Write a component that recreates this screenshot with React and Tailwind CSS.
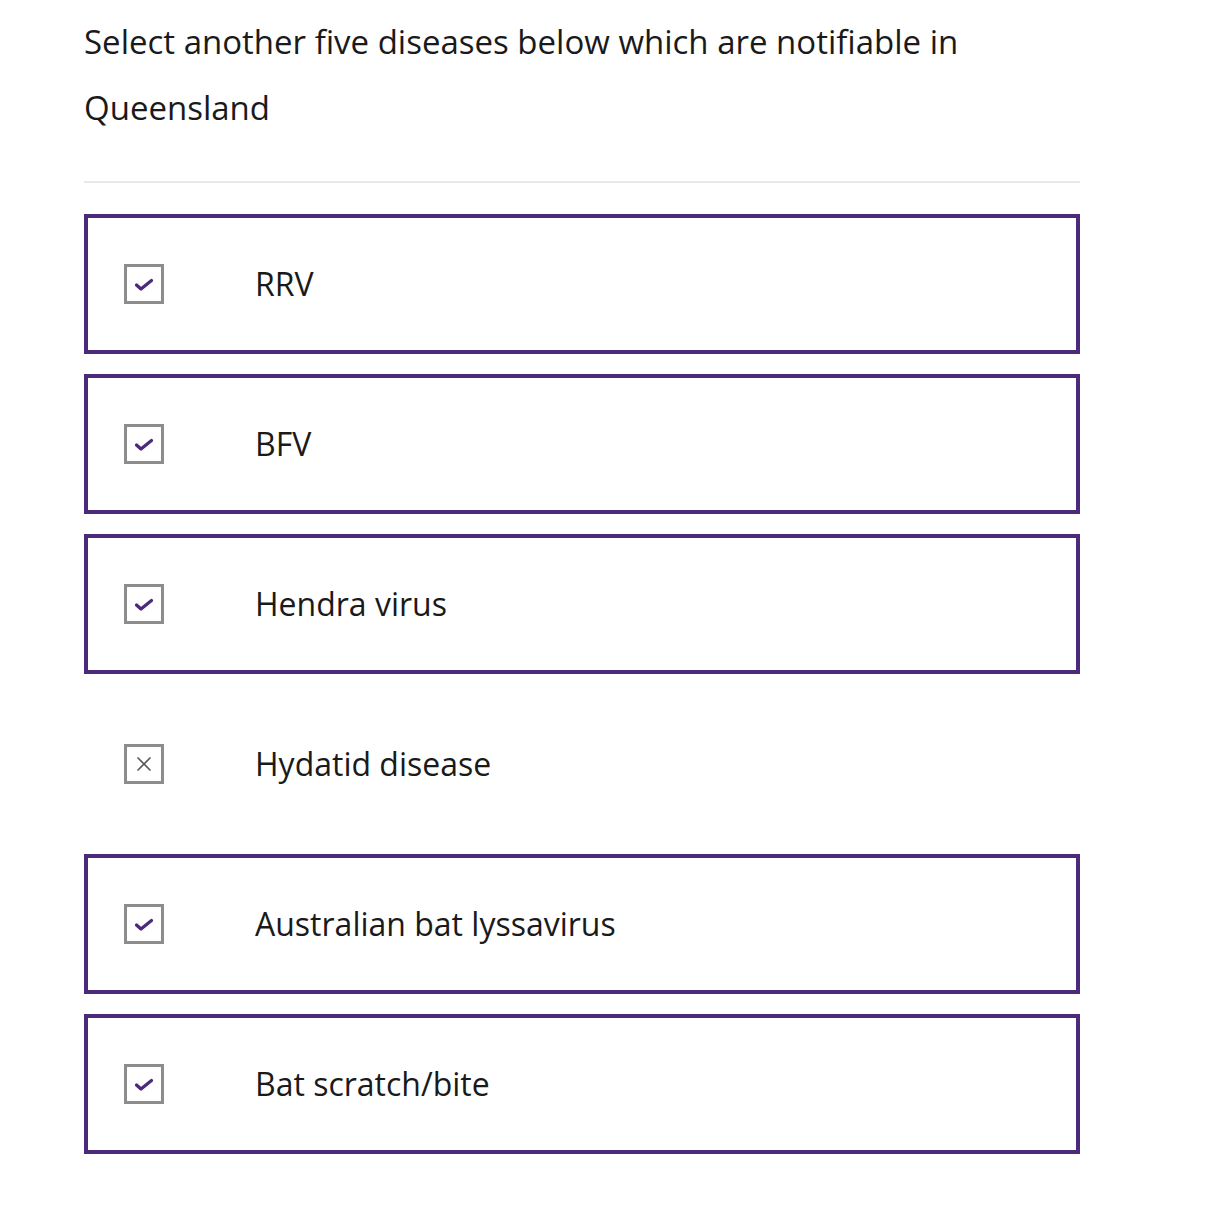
const items = [
  { label: 'RRV', correct: true },
  { label: 'BFV', correct: true },
  { label: 'Hendra virus', correct: true },
  { label: 'Hydatid disease', correct: false },
  { label: 'Australian bat lyssavirus', correct: true },
  { label: 'Bat scratch/bite', correct: true },
]

function Mark({ correct }) {
  return (
    <div className="w-10 h-10 border-[3px] border-[#8c8c8c] flex items-center justify-center shrink-0 bg-white">
      {correct ? (
        <svg width="20" height="15" viewBox="0 0 20 15" fill="none">
          <path d="M2.5 8l4.5 4L17.5 3.5" stroke="#4b2a7b" strokeWidth="3.2" strokeLinecap="round" strokeLinejoin="round" />
        </svg>
      ) : (
        <svg width="18" height="18" viewBox="0 0 18 18" fill="none">
          <path d="M2.5 2.5l13 13M15.5 2.5l-13 13" stroke="#555" strokeWidth="1.6" />
        </svg>
      )}
    </div>
  )
}

export default function App() {
  return (
    <div className="bg-white min-h-[1222px] font-['Open_Sans',sans-serif] text-[#1a1a1a]">
      <div className="w-[996px] ml-[84px] pt-[9px]">
        <p className="text-[33px] leading-[66px]">
          Select another five diseases below which are notifiable in Queensland
        </p>
        <div className="h-[2px] bg-[#e8e8e8] mt-[40px]" />
        <div className="mt-[31px] flex flex-col gap-5">
          {items.map((it) => (
            <div
              key={it.label}
              className={
                'h-[140px] flex items-center pl-9 ' +
                (it.correct ? 'border-4 border-[#4b2a7b]' : 'border-4 border-transparent')
              }
            >
              <Mark correct={it.correct} />
              <span className="ml-[91px] text-[32px]">{it.label}</span>
            </div>
          ))}
        </div>
      </div>
    </div>
  )
}
